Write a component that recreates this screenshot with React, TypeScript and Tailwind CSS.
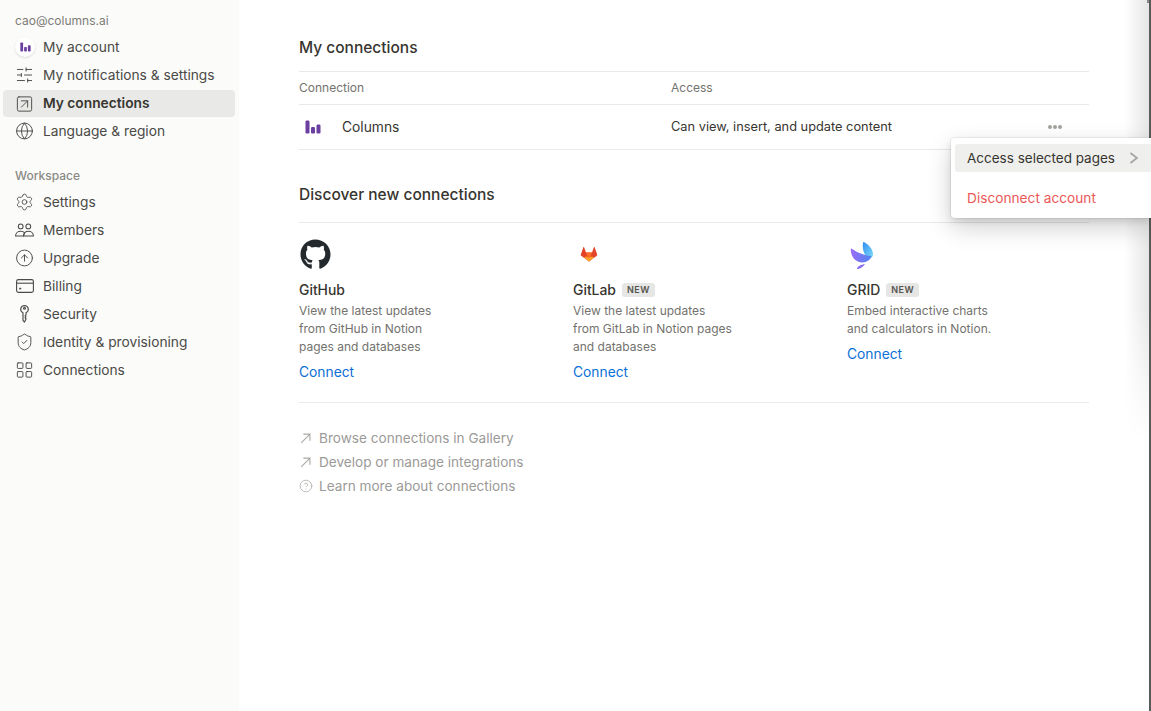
import React from 'react';
import { SlidersHorizontal, SquareArrowUpRight, Globe, Settings, CircleArrowUp, ShieldCheck, LayoutGrid, CircleHelp } from 'lucide-react';
import { FaGithub } from 'react-icons/fa';

const ColumnsLogo: React.FC<{ className?: string }> = ({ className }) => (
    <svg viewBox="0 0 16 14" className={className} fill="#6b3fa0">
        <rect x="0.5" y="0.5" width="4" height="13" rx="1.2" />
        <rect x="6" y="7" width="4" height="6.5" rx="1.2" />
        <rect x="11.5" y="4.5" width="4" height="9" rx="1.2" />
    </svg>
);

const KeyIcon = () => (
    <svg viewBox="0 0 20 20" className="w-[20px] h-[20px]" fill="none" stroke="#4a4a48" strokeWidth="1.2" strokeLinejoin="round">
        <path d="M10 1a4 4 0 0 1 1.6 7.66V11l-1 1 1 1-1 1 1 1.2-1.6 3.300-1.6-1.800V8.660A4 4 0 0 1 10 1Z" />
        <circle cx="10" cy="4" r="1" />
    </svg>
);

const MembersIcon = () => (
    <svg viewBox="0 0 20 14" className="w-[20px] h-[14px]" fill="none" stroke="#4a4a48" strokeWidth="1.1">
        <circle cx="6" cy="3.200" r="2.500" />
        <circle cx="14" cy="3.200" r="2.500" />
        <path d="M0.600 13.300c0-3 2.300-5 5.400-5 1.800 0 3.200.6 4.100 1.700-.7.800-1 2-1 3.300H.6Z" />
        <path d="M19.400 13.300c0-3-2.300-5-5.400-5-2.500 0-4.600 1.400-5.100 5h10.500Z" />
    </svg>
);

const BillingIcon = () => (
    <svg viewBox="0 0 18 14" className="w-[18px] h-[14px]" fill="none" stroke="#4a4a48" strokeWidth="1.1">
        <rect x="0.600" y="0.600" width="16.800" height="12.800" rx="1.800" />
        <path d="M0.600 4.200h16.800" />
        <rect x="3.200" y="8.800" width="2" height="1.600" fill="#4a4a48" stroke="none" />
    </svg>
);

const LinkArrow = () => (
    <svg viewBox="0 0 16 16" className="w-[14px] h-[14px]" fill="none" stroke="#aaa9a5" strokeWidth="1.300">
        <path d="M2.500 13.500 12.500 3.500M5 3.500h7.500V11" />
    </svg>
);

const GitlabLogo = () => (
    <svg viewBox="0 0 24 24" className="w-[18px] h-[18px] ml-[7px]">
        <path d="M12 22 1.6 14.2c-.5-.4-.7-1-.5-1.6L4.5 3c.1-.5.8-.5 1 0L8 10h8l2.500-7c.2-.5.9-.5 1 0l3.400 9.600c.2.6 0 1.200-.5 1.600L12 22Z" fill="#e24329" />
        <path d="M12 22 8 10h8l-4 12Z" fill="#fc6d26" />
        <path d="M12 22 5.500 16.500 8 15.200 12 17l4-1.800 2.500 1.300L12 22Z" fill="#fca326" />
    </svg>
);

const GridLogo = () => (
    <svg viewBox="0 0 30 30" className="w-[30px] h-[30px]">
        <defs>
            <linearGradient id="gridWing" x1="0" y1="0" x2="1" y2="0">
                <stop offset="0" stopColor="#9a6cf7" />
                <stop offset="1" stopColor="#4f86f0" />
            </linearGradient>
            <linearGradient id="gridTop" x1="0" y1="0" x2="1" y2="1">
                <stop offset="0" stopColor="#2f8fee" />
                <stop offset="1" stopColor="#7fdcfb" />
            </linearGradient>
        </defs>
        <path d="M17 3C21 5 26 10 26 15C26 19 23 20 21 19C17 16 15 10 16 4C16 3 16.500 2.800 17 3Z" fill="url(#gridTop)" />
        <path d="M4.500 9.500C8 12 14 16 24.500 17C24 20.500 20 23.500 15 23.500C9 23.500 4 18 3.800 11C3.800 10 4 9.300 4.500 9.500Z" fill="url(#gridWing)" />
        <path d="M10 29.500C10.500 27.500 14 25.500 18 25C17 27 14 29.300 11 30C10.400 30 10 30 10 29.500Z" fill="#8b6cf6" />
    </svg>
);

const iconCls = 'w-[20px] h-[20px] text-[#4a4a48]';

const accountItems = [
    { label: 'My notifications & settings', icon: <SlidersHorizontal className={iconCls} strokeWidth={1.2} /> },
    { label: 'My connections', icon: <SquareArrowUpRight className={iconCls} strokeWidth={1.2} />, active: true },
    { label: 'Language & region', icon: <Globe className={iconCls} strokeWidth={1.2} /> },
];

const workspaceItems = [
    { label: 'Settings', icon: <Settings className="w-[22px] h-[22px] text-[#4a4a48]" strokeWidth={1.1} /> },
    { label: 'Members', icon: <MembersIcon /> },
    { label: 'Upgrade', icon: <CircleArrowUp className={iconCls} strokeWidth={1.2} /> },
    { label: 'Billing', icon: <BillingIcon /> },
    { label: 'Security', icon: <KeyIcon /> },
    { label: 'Identity & provisioning', icon: <ShieldCheck className={iconCls} strokeWidth={1.2} /> },
    { label: 'Connections', icon: <LayoutGrid className={iconCls} strokeWidth={1.2} /> },
];

const cards = [
    { name: 'GitHub', logo: <FaGithub className="w-[31px] h-[31px] ml-[1px] text-[#24292e]" />, lines: ['View the latest updates', 'from GitHub in Notion', 'pages and databases'] },
    { name: 'GitLab', isNew: true, logo: <GitlabLogo />, lines: ['View the latest updates', 'from GitLab in Notion pages', 'and databases'] },
    { name: 'GRID', isNew: true, logo: <GridLogo />, lines: ['Embed interactive charts', 'and calculators in Notion.'] },
];

const NavRow: React.FC<{ label: string; icon: React.ReactNode; active?: boolean }> = ({ label, icon, active }) => (
    <div className={`ml-[3px] mr-[4px] flex items-center gap-[9px] px-[12px] rounded ${active ? 'mt-px h-[27px] bg-[#e9e9e7] font-semibold text-[#37352f]' : 'h-7 text-[#4a4a46]'}`}>
        <span className="w-[19px] flex justify-center shrink-0">{icon}</span>
        <span className={`text-[13.75px] leading-5 whitespace-nowrap ${active ? '-mt-[1px]' : ''}`}>{label}</span>
    </div>
);

const App: React.FC = () => {
    return (
        <div className="relative flex h-screen overflow-hidden bg-white font-['Inter',sans-serif] text-[#37352f]">
            <aside className="w-[239px] shrink-0 bg-[#fbfbfa] pt-[9px]">
                <div className="px-[15px] h-[23px] mb-[1px] flex items-center text-[12px] text-[#7d7c78]">cao@columns.ai</div>
                <div className="ml-[3px] mr-[4px] h-7 flex items-center gap-[9px] px-[12px] text-[#4a4a46]">
                    <span className="w-[20px] h-[20px] rounded-full bg-white shadow-sm flex items-center justify-center shrink-0 -mr-[1px]">
                        <ColumnsLogo className="w-[11px] h-[10px]" />
                    </span>
                    <span className="text-[13.75px] leading-5">My account</span>
                </div>
                {accountItems.map(item => <NavRow key={item.label} {...item} />)}
                <div className="px-[15px] mt-[21px] mb-[2px] h-[20px] flex items-center text-[12px] font-medium text-[#8a8984]">Workspace</div>
                {workspaceItems.map(item => <NavRow key={item.label} {...item} />)}
            </aside>

            <main className="pl-[60px] pt-[38px] w-[850px] shrink-0">
                <h2 className="text-[15.5px] leading-5 font-medium text-[#37352f] pb-[13px] border-b border-[#e9e9e7]">My connections</h2>
                <div className="flex items-center h-[33px] border-b border-[#e9e9e7] text-[12px] text-[#73726e]">
                    <span className="w-[372px]">Connection</span>
                    <span>Access</span>
                </div>
                <div className="flex items-center h-[45px] border-b border-[#e9e9e7]">
                    <span className="w-[372px] flex items-center text-[13.8px] leading-5 -mt-[1px] text-[#37352f]">
                        <span className="w-[43px] pl-[6px]"><ColumnsLogo className="w-[16px] h-[14px]" /></span>
                        Columns
                    </span>
                    <span className="flex-1 text-[12.8px] text-[#37352f]">Can view, insert, and update content</span>
                    <span className="flex gap-[1px] mr-[27px] -mt-[1px]">
                        <i className="w-[4px] h-[4px] rounded-full bg-[#a3a29e]" />
                        <i className="w-[4px] h-[4px] rounded-full bg-[#a3a29e]" />
                        <i className="w-[4px] h-[4px] rounded-full bg-[#a3a29e]" />
                    </span>
                </div>

                <h2 className="mt-[35px] text-[15.5px] leading-5 font-medium text-[#37352f] pb-[17px] border-b border-[#e9e9e7]">Discover new connections</h2>
                <div className="grid grid-cols-[274px_274px_1fr] pt-[15px] pb-[20px] border-b border-[#e9e9e7]">
                    {cards.map(card => (
                        <div key={card.name}>
                            <div className="h-[32px] flex items-center">{card.logo}</div>
                            <div className="mt-[10px] h-5 flex items-center gap-[6px]">
                                <span className="text-[13.9px] font-medium text-[#37352f]">{card.name}</span>
                                {card.isNew && <span className="h-[14px] px-[5px] flex items-center rounded-[3px] bg-[#e6e6e4] text-[9px] font-semibold tracking-[0.06em] text-[#55544f]">NEW</span>}
                            </div>
                            <div className="mt-[2px] text-[12px] leading-[18px] text-[#73726e]">
                                {card.lines.map(line => <div key={line}>{line}</div>)}
                            </div>
                            <div className="mt-[6px] text-[13.8px] leading-5 text-[#0b6fd6]">Connect</div>
                        </div>
                    ))}
                </div>

                <div className="mt-[23px] text-[13.6px] text-[#9b9a97]">
                    <div className="h-6 flex items-center gap-[6px]"><LinkArrow />Browse connections in Gallery</div>
                    <div className="h-6 flex items-center gap-[6px]"><LinkArrow />Develop or manage integrations</div>
                    <div className="h-6 flex items-center gap-[6px]"><CircleHelp className="w-[14px] h-[14px] text-[#aaa9a5]" strokeWidth={1.3} />Learn more about connections</div>
                </div>
            </main>

            {/* edge of the modal behind the window */}
            <div className="absolute top-0 right-[2px] w-[24px] h-[440px] bg-gradient-to-r from-transparent to-black/10 [mask-image:linear-gradient(to_bottom,black_70%,transparent)]" />
            <div className="absolute top-0 bottom-0 right-0 w-[2px] bg-[#5a5a5a]" />
            <div className="absolute top-0 right-[2px] w-[2px] h-[3px] bg-[#8a8a8a]" />

            <div className="absolute left-[951px] right-0 top-[138px] h-[80px] bg-white rounded-l-[4px] shadow-[0_0_0_1px_rgba(15,15,15,0.05),0_3px_6px_rgba(15,15,15,0.1),0_9px_24px_rgba(15,15,15,0.2)] pt-[6px]">
                <div className="ml-[4px] h-[28px] pl-[12px] flex items-center bg-[#efefee] rounded-l-[3px] text-[13.5px] text-[#37352f]">
                    <span className="whitespace-nowrap leading-5 -mt-[1px]">Access selected pages</span>
                    <svg viewBox="0 0 10 12" className="ml-[14px] w-[10px] h-[12px]" fill="none" stroke="#a3a29e" strokeWidth="1.6"><polyline points="1.500,1 8,6 1.500,11" /></svg>
                </div>
                <div className="mt-[16px] ml-[16px] h-5 flex items-center text-[13.7px] text-[#eb5757] whitespace-nowrap">Disconnect account</div>
            </div>
        </div>
    );
};

export default App;
